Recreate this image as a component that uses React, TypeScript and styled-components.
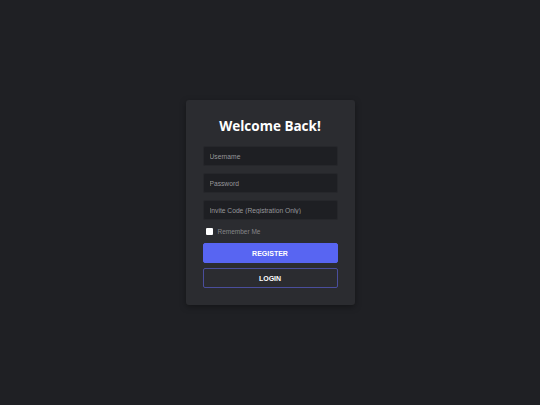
import React, { useState } from 'react';
import styled, { createGlobalStyle } from 'styled-components';

const GlobalStyle = createGlobalStyle`
  html, body {
    margin: 0;
    padding: 0;
    height: 100%;
    background: #1f2024;
  }
  #root {
    height: 100%;
  }
`;

const Page = styled.div`
  height: 100vh;
  display: flex;
  align-items: center;
  justify-content: center;
  font-family: 'Liberation Sans', Arial, sans-serif;
`;

const Card = styled.form`
  width: 169px;
  box-sizing: border-box;
  padding: 16px 17px 17px;
  background: #2b2c30;
  border-radius: 3px;
  box-shadow: 0 2px 6px rgba(0, 0, 0, 0.35);
  display: flex;
  flex-direction: column;
`;

const Title = styled.h2`
  margin: 0 0 10px;
  text-align: center;
  font-family: 'Open Sans', sans-serif;
  font-weight: 700;
  font-size: 13.5px;
  line-height: 20px;
  color: #ffffff;
`;

const Input = styled.input`
  box-sizing: border-box;
  height: 20px;
  width: 100%;
  margin-bottom: 7px;
  padding: 0 6px;
  background: #1e1f23;
  border: 1px solid #26272b;
  border-radius: 2px;
  color: #dcddde;
  font-family: 'Liberation Sans', Arial, sans-serif;
  font-size: 6.7px;
  outline: none;
  &::placeholder {
    color: #96979b;
  }
`;

const CheckRow = styled.label`
  display: flex;
  align-items: center;
  gap: 5px;
  height: 8px;
  margin: 0 0 8px 3px;
  font-size: 6.5px;
  color: #85868a;
`;

const Check = styled.input`
  appearance: none;
  margin: 0;
  width: 7px;
  height: 7px;
  background: #ffffff;
  border-radius: 1px;
`;

const Button = styled.button<{ $outline?: boolean }>`
  box-sizing: border-box;
  height: 20px;
  width: 100%;
  margin-bottom: ${(p) => (p.$outline ? '0' : '5px')};
  border-radius: 2px;
  border: 1px solid ${(p) => (p.$outline ? '#4a4e9c' : '#5865f2')};
  background: ${(p) => (p.$outline ? 'transparent' : '#5865f2')};
  color: #ffffff;
  font-family: 'Liberation Sans', Arial, sans-serif;
  font-weight: 700;
  font-size: 7px;
  cursor: pointer;
`;

export default function App() {
  const [remember, setRemember] = useState(false);
  return (
    <>
      <GlobalStyle />
      <Page>
        <Card onSubmit={(e) => e.preventDefault()}>
          <Title>Welcome Back!</Title>
          <Input placeholder="Username" />
          <Input type="password" placeholder="Password" />
          <Input placeholder="Invite Code (Registration Only)" />
          <CheckRow>
            <Check type="checkbox" checked={remember} onChange={() => setRemember(!remember)} />
            Remember Me
          </CheckRow>
          <Button type="button">REGISTER</Button>
          <Button type="button" $outline>
            LOGIN
          </Button>
        </Card>
      </Page>
    </>
  );
}
